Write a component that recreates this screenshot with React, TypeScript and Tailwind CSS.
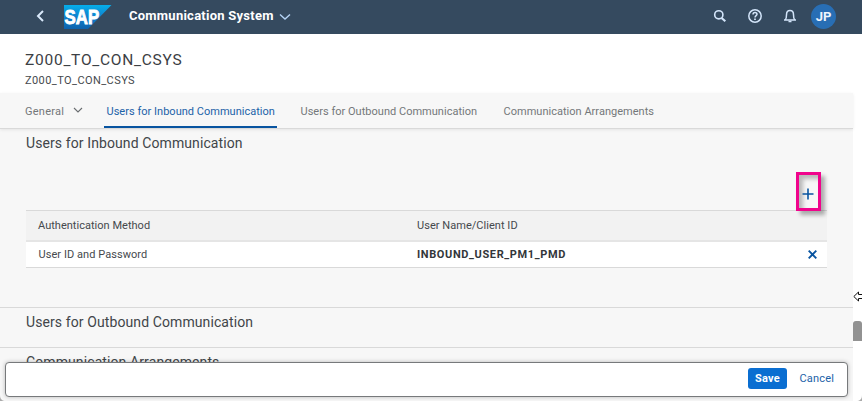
import type { ReactNode } from "react";

const tabs = [
  { label: "Users for Inbound Communication", active: true, box: "ml-[21px] w-[173px] pl-[2.5px]" },
  { label: "Users for Outbound Communication", active: false, box: "ml-[23.5px] w-[179.5px]" },
  { label: "Communication Arrangements", active: false, box: "ml-[23.5px] w-[152px]" },
];

function ShellHeader() {
  return (
    <header className="flex h-[34px] shrink-0 items-center bg-[#354a5f]">
      <svg className="ml-[35px] mt-[-2px] shrink-0" width="10" height="12" viewBox="0 0 10 12" fill="none" stroke="#d9e9fb" strokeWidth="2">
        <path d="M8 1 3 6l5 5" />
      </svg>
      <svg className="ml-[19px] mt-[-1px] shrink-0" width="48" height="24" viewBox="0 0 48 24">
        <defs>
          <linearGradient id="sap" x1="0" y1="0" x2="0" y2="1">
            <stop offset="0" stopColor="#05aeea" />
            <stop offset="0.5" stopColor="#1180cc" />
            <stop offset="1" stopColor="#0d62ad" />
          </linearGradient>
        </defs>
        <path d="M0 0h47.500L24 24H0z" fill="url(#sap)" />
        <text x="0.6" y="18.800" textLength="34.500" lengthAdjust="spacingAndGlyphs" fontFamily="Liberation Sans, sans-serif" fontWeight="700" fontSize="19.500" fill="#fff" stroke="#fff" strokeWidth="0.9">SAP</text>
      </svg>
      <h1 className="ml-[17px] mt-[-3px] w-[145px] whitespace-nowrap text-[13px] font-bold leading-4 tracking-[0.25px] text-white">Communication System</h1>
      <svg className="ml-[5px] mt-[-1px] shrink-0" width="12" height="8" viewBox="0 0 12 8" fill="none" stroke="#b5d3f5" strokeWidth="1.4">
        <path d="m1 1.500 5 4.500 5-4.500" />
      </svg>
      <div className="ml-auto mr-[26px] mt-[-2px] flex items-center">
        <svg width="14" height="14" viewBox="0 0 14 14" fill="none" stroke="#d3e5fa">
          <circle cx="5.800" cy="5.800" r="4.100" strokeWidth="1.600" />
          <path d="m8.600 9 3.700 3.300" strokeWidth="2.200" />
        </svg>
        <svg className="ml-[20px]" width="16" height="16" viewBox="0 0 16 16" fill="none" stroke="#d3e5fa">
          <circle cx="8" cy="8" r="6.200" strokeWidth="1.500" />
          <path d="M6 6.400c0-2.700 4-2.500 4-.2C10 7.600 8 7.600 8 9.400" strokeWidth="1.500" />
          <path d="M8 10.500V12" strokeWidth="1.700" />
        </svg>
        <svg className="ml-[20px]" width="14" height="14" viewBox="0 0 14 14" fill="none" stroke="#d3e5fa" strokeWidth="1.500">
          <path d="M1 11h12M2.300 10.800c1.100-1 1.200-2 1.200-5C3.500 3 5 1.600 7 1.600S10.500 3 10.500 5.800c0 3 .1 4 1.200 5" />
          <path d="M5.500 12.500h3" />
        </svg>
        <span className="ml-[14px] flex size-[25px] items-center justify-center rounded-full bg-[#286eb4] pt-px text-[13px] font-bold leading-none text-[#eef5fd]">JP</span>
      </div>
    </header>
  );
}

function SectionTitle({ children }: { children: ReactNode }) {
  return <h2 className="whitespace-nowrap pl-[26px] text-[14px] leading-4 tracking-[0.1px] text-[#414549]">{children}</h2>;
}

export default function App() {
  return (
    <div className="relative flex h-[401px] w-[862px] flex-col overflow-hidden bg-white font-['Roboto','Liberation_Sans',sans-serif] text-[11px] text-[#45494d]">
      <ShellHeader />
      <div className="h-[59px] shrink-0 pl-[25px] pt-[17px]">
        <div className="whitespace-nowrap text-[15.5px] leading-[18px] tracking-[0.74px] text-[#3c4044]">Z000_TO_CON_CSYS</div>
        <div className="mt-[5px] whitespace-nowrap text-[11px] leading-[14px] tracking-[0.42px]">Z000_TO_CON_CSYS</div>
      </div>
      <div className="flex h-[308px] w-[853px] flex-col bg-[#f7f7f7]">
        <nav className="z-10 flex h-[36px] shrink-0 border-b border-[#d9d9d9] pl-[25px] text-[#74777a] shadow-[0_1px_3px_rgba(0,0,0,0.08)]">
          <div className="flex w-[58px] items-center justify-between pt-[3px]">
            <span className="tracking-[0.25px]">General</span>
            <svg className="mt-[-3px]" width="10" height="7" viewBox="0 0 10 7" fill="none" stroke="#6a6d70" strokeWidth="1.100">
              <path d="m1 1 4 4 4-4" />
            </svg>
          </div>
          {tabs.map((tab) => (
            <div key={tab.label} className={`${tab.box} flex h-[35px] shrink-0 items-center whitespace-nowrap tracking-[0.02px] ${tab.active ? "border-b-2 border-[#0854a0] pt-[6px] text-[#1c62a8]" : "pt-[4px]"}`}>
              {tab.label}
            </div>
          ))}
        </nav>
        <section className="h-[179px] shrink-0 border-b border-[#d9d9d9] pt-[6px]">
          <SectionTitle>Users for Inbound Communication</SectionTitle>
          <div className="mr-[26px] mt-[21px] flex h-[38px] items-center justify-end">
            <div className="relative mr-[6px] mt-px flex h-[39px] w-[25px] items-center justify-center border-[3px] border-[#f0048c] pr-px pt-[4px] shadow-[4px_4px_4px_rgba(0,0,0,0.3),inset_4px_4px_4px_rgba(0,0,0,0.25)]">
              <svg className="shrink-0" width="12" height="12" viewBox="0 0 12 12" fill="none" stroke="#0854a0" strokeWidth="1.600">
                <path d="M6 .5v11M.5 6h11" />
              </svg>
            </div>
          </div>
          <div className="ml-[26px] w-[801px] border-y border-[#d9d9d9]">
            <div className="flex h-[31px] items-center border-b-2 border-[#e5e5e5] bg-[#f2f2f2] pl-[12px] pt-px">
              <span className="w-[379px] tracking-[0.02px]">Authentication Method</span>
              <span className="tracking-[0.04px]">User Name/Client ID</span>
            </div>
            <div className="flex h-[25px] items-center bg-white pl-[12.5px] pr-[10px]">
              <span className="w-[378.5px] pt-[2px] tracking-[0.06px]">User ID and Password</span>
              <span className="pt-[2px] font-bold tracking-[0.62px] text-[#32363a]">INBOUND_USER_PM1_PMD</span>
              <svg className="ml-auto" width="9" height="9" viewBox="0 0 9 9" fill="none" stroke="#0854a0" strokeWidth="1.900">
                <path d="m.7.7 7.600 7.600M8.300.7.7 8.300" />
              </svg>
            </div>
          </div>
        </section>
        <section className="h-[40px] shrink-0 border-b border-[#d9d9d9] pt-[6px]">
          <SectionTitle>Users for Outbound Communication</SectionTitle>
        </section>
        <section className="pt-[6px]">
          <SectionTitle>Communication Arrangements</SectionTitle>
        </section>
      </div>
      <footer className="absolute bottom-[4px] left-[5px] z-20 flex h-[35px] w-[843px] items-center justify-end rounded-[4px] border border-[#77797b] bg-white pr-[13px] shadow-[0_0_4px_rgba(0,0,0,0.25)]">
        <button className="mt-[-2px] h-[21px] w-[39px] rounded-[3px] bg-[#0a6ed1] pt-px text-[11px] font-bold tracking-[0.300px] text-white">Save</button>
        <button className="ml-[12.5px] mt-[-1px] w-[34.5px] whitespace-nowrap text-left tracking-[0.2px] text-[#1c62a8]">Cancel</button>
      </footer>
      <div className="absolute right-0 top-[321px] h-[20px] w-[9px] rounded-t-[3px] bg-[#929292]" />
      <svg className="absolute right-0 top-[291px]" width="9" height="11" viewBox="0 0 9 11" fill="white" stroke="#111" strokeWidth="1">
        <path d="M10 3.500H5.500V1L.8 5.500l4.700 4.500V7.500H10" />
      </svg>
      <svg className="absolute bottom-0 left-0" width="6" height="6" viewBox="0 0 6 6">
        <path d="M0 0c0 4 2 6 6 6H0z" fill="#aaa" />
      </svg>
      <svg className="absolute bottom-0 right-0" width="6" height="6" viewBox="0 0 6 6">
        <path d="M6 0c0 4-2 6-6 6h6z" fill="#aaa" />
      </svg>
    </div>
  );
}
